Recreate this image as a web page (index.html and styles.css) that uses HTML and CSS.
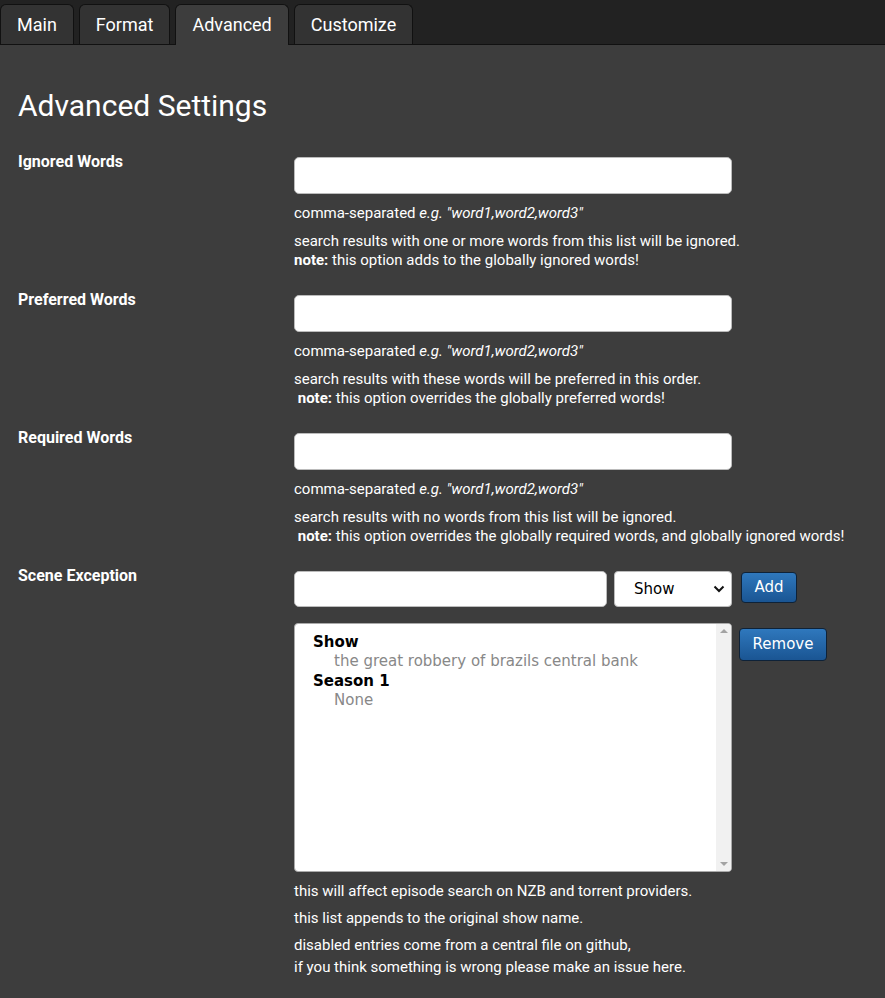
FILE: index.html
```html
<!DOCTYPE html>
<html>
<head>
<meta charset="utf-8">
<link rel="stylesheet" href="styles.css">
</head>
<body>
<nav class="tabbar">
  <div class="tab">Main</div>
  <div class="tab">Format</div>
  <div class="tab active">Advanced</div>
  <div class="tab">Customize</div>
</nav>
<main class="content">
  <h1 class="title">Advanced Settings</h1>

  <section class="row">
    <div class="label">Ignored Words</div>
    <div class="field">
      <div class="input wide"></div>
      <p class="help">comma-separated <em>e.g. "word1,word2,word3"</em></p>
      <p class="help gap">search results with one or more words from this list will be ignored.<br><b>note:</b> this option adds to the globally ignored words!</p>
    </div>
  </section>

  <section class="row">
    <div class="label">Preferred Words</div>
    <div class="field">
      <div class="input wide"></div>
      <p class="help">comma-separated <em>e.g. "word1,word2,word3"</em></p>
      <p class="help gap">search results with these words will be preferred in this order.<br>&nbsp;<b>note:</b> this option overrides the globally preferred words!</p>
    </div>
  </section>

  <section class="row">
    <div class="label">Required Words</div>
    <div class="field">
      <div class="input wide"></div>
      <p class="help">comma-separated <em>e.g. "word1,word2,word3"</em></p>
      <p class="help gap">search results with no words from this list will be ignored.<br>&nbsp;<b>note:</b> this option overrides the globally required words, and globally ignored words!</p>
    </div>
  </section>

  <section class="row">
    <div class="label">Scene Exception</div>
    <div class="field">
      <div class="add-line">
        <div class="input narrow"></div>
        <div class="select">Show<svg class="chev" viewBox="0 0 12 8" width="12" height="8"><path d="M1.5 1.5 L6 6 L10.5 1.5" fill="none" stroke="#111" stroke-width="2"/></svg></div>
        <div class="btn btn-add">Add</div>
      </div>
      <div class="list-line">
        <div class="listbox">
          <div class="list-items">
            <div class="grp">Show</div>
            <div class="opt">the great robbery of brazils central bank</div>
            <div class="grp">Season 1</div>
            <div class="opt">None</div>
          </div>
          <div class="scroll">
            <span class="arr up"></span>
            <span class="arr down"></span>
          </div>
        </div>
        <div class="btn btn-remove">Remove</div>
      </div>
      <p class="help first">this will affect episode search on NZB and torrent providers.</p>
      <p class="help gap2">this list appends to the original show name.</p>
      <p class="help gap2 tall">disabled entries come from a central file on github,<br>if you think something is wrong please make an issue here.</p>
    </div>
  </section>
</main>
</body>
</html>
```
FILE: styles.css
```css
html, body {
  margin: 0;
  padding: 0;
  background: #3d3d3d;
  font-family: Roboto, "Liberation Sans", sans-serif;
  color: #fff;
}
.tabbar {
  height: 45px;
  background: #222;
  border-bottom: 1px solid #111;
  display: flex;
  align-items: flex-end;
  gap: 5px;
  box-sizing: border-box;
}
.tab {
  height: 40px;
  box-sizing: border-box;
  padding: 0 16px;
  background: #333;
  border: 1px solid #111;
  border-bottom: none;
  border-radius: 6px 6px 0 0;
  font-size: 18px;
  line-height: 40px;
  color: #fff;
}
.tab.active {
  background: #3d3d3d;
  height: 41px;
  margin-bottom: -1px;
}
.content {
  padding: 0 18px;
}
.title {
  margin: 0;
  padding-top: 43px;
  font-size: 30px;
  font-weight: 400;
  line-height: 36px;
  height: 62px;
  box-sizing: content-box;
}
.row {
  display: grid;
  grid-template-columns: 276px 1fr;
  margin-bottom: 18px;
}
.label {
  font-size: 16px;
  font-weight: 700;
  line-height: 20px;
  padding-top: 2px;
}
.field {
  padding-top: 7px;
}
.input {
  height: 37px;
  box-sizing: border-box;
  background: #fff;
  border: 1px solid #bbb;
  border-radius: 5px;
}
.input.wide { width: 438px; }
.input.narrow { width: 313px; height: 36px; }
.help {
  margin: 10px 0 0 0;
  font-size: 15px;
  line-height: 19px;
}
.help.gap { margin-top: 9px; }
.help em { font-style: italic; }
.help.first { margin-top: 10px; }
.help.gap2 { margin-top: 8px; }
.help.tall { line-height: 22px; margin-top: 6px; }
.add-line {
  display: flex;
  align-items: flex-start;
}
.select {
  margin-left: 7px;
  width: 118px;
  height: 36px;
  box-sizing: border-box;
  background: #fff;
  border: 1px solid #bbb;
  border-radius: 4px;
  color: #000;
  font-family: "DejaVu Sans", Verdana, sans-serif;
  font-size: 15px;
  line-height: 34px;
  padding-left: 19px;
  position: relative;
}
.chev {
  position: absolute;
  right: 6px;
  top: 13px;
}
.btn {
  box-sizing: border-box;
  background: linear-gradient(#2f78bd, #1a5593);
  border: 1px solid #0e2238;
  border-radius: 4px;
  color: #fff;
  font-family: "DejaVu Sans", Verdana, sans-serif;
  font-size: 15px;
  text-align: center;
}
.btn-add {
  margin-left: 9px;
  margin-top: 1px;
  width: 56px;
  height: 31px;
  line-height: 29px;
}
.list-line {
  display: flex;
  align-items: flex-start;
  margin-top: 16px;
}
.listbox {
  width: 438px;
  height: 249px;
  box-sizing: border-box;
  background: #fff;
  border: 1px solid #aaa;
  border-radius: 4px;
  display: flex;
  overflow: hidden;
}
.list-items {
  flex: 1;
  padding: 9px 0 0 18px;
  font-family: "DejaVu Sans", Verdana, sans-serif;
  font-size: 15px;
  line-height: 19.3px;
}
.grp {
  color: #000;
  font-weight: 700;
}
.opt {
  color: #888;
  padding-left: 21px;
}
.scroll {
  width: 15px;
  background: #f1f1f1;
  position: relative;
}
.arr {
  position: absolute;
  left: 4px;
  width: 0;
  height: 0;
  border-left: 4px solid transparent;
  border-right: 4px solid transparent;
}
.arr.up {
  top: 5px;
  border-bottom: 4px solid #a3a3a3;
}
.arr.down {
  bottom: 5px;
  border-top: 4px solid #a3a3a3;
}
.btn-remove {
  margin-left: 7px;
  margin-top: 5px;
  width: 88px;
  height: 33px;
  line-height: 31px;
}
```
